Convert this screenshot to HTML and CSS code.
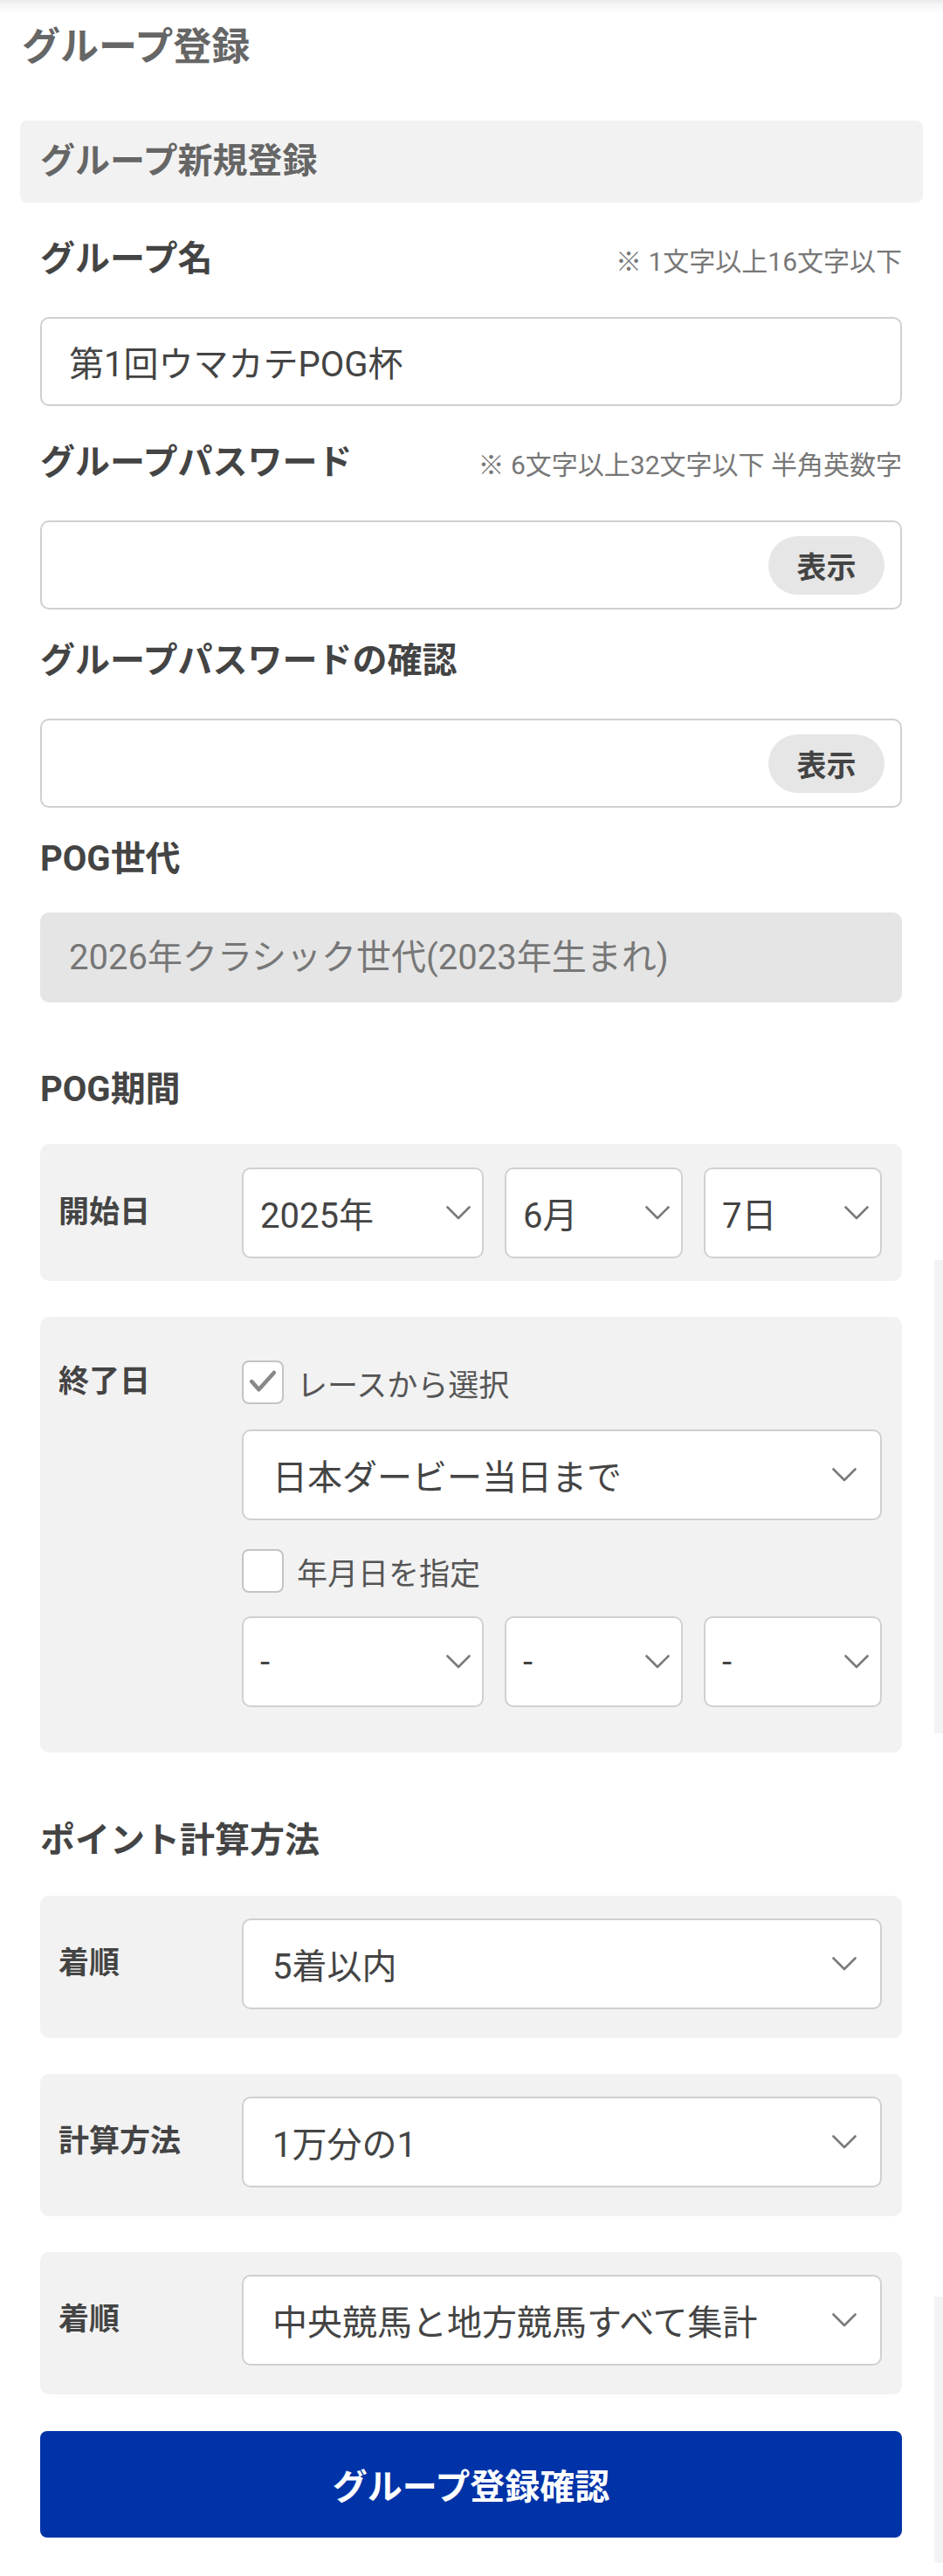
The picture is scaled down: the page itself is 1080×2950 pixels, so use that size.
FILE: index.html
```html
<!DOCTYPE html>
<html lang="ja">
<head>
<meta charset="utf-8">
<title>グループ登録</title>
<link rel="stylesheet" href="styles.css">
</head>
<body>
<div class="page">
  <h1 class="title">グループ登録</h1>
  <h2 class="section-head">グループ新規登録</h2>
  <form class="form">
    <div class="field">
      <div class="field-head with-hint">
        <label class="field-label">グループ名</label>
        <span class="hint">※ 1文字以上16文字以下</span>
      </div>
      <input class="text-input" type="text" value="第1回ウマカテPOG杯">
    </div>

    <div class="field">
      <div class="field-head with-hint">
        <label class="field-label">グループパスワード</label>
        <span class="hint">※ 6文字以上32文字以下 半角英数字</span>
      </div>
      <div class="pw-wrap">
        <input class="pw-input" type="password" value="">
        <button type="button" class="show-btn">表示</button>
      </div>
    </div>

    <div class="field">
      <div class="field-head">
        <label class="field-label">グループパスワードの確認</label>
      </div>
      <div class="pw-wrap">
        <input class="pw-input" type="password" value="">
        <button type="button" class="show-btn">表示</button>
      </div>
    </div>

    <div class="field">
      <div class="field-head">
        <label class="field-label">POG世代</label>
      </div>
      <div class="disabled-input">2026年クラシック世代(2023年生まれ)</div>
    </div>

    <div class="group-title">POG期間</div>

    <div class="row-box start-box">
      <div class="row-label tall">開始日</div>
      <div class="date-row">
        <div class="select year"><span>2025年</span><svg class="chev" viewBox="0 0 28 16" width="28" height="16"><polyline points="1.5,1.5 14,14 26.5,1.5"/></svg></div>
        <div class="select"><span>6月</span><svg class="chev" viewBox="0 0 28 16" width="28" height="16"><polyline points="1.5,1.5 14,14 26.5,1.5"/></svg></div>
        <div class="select"><span>7日</span><svg class="chev" viewBox="0 0 28 16" width="28" height="16"><polyline points="1.5,1.5 14,14 26.5,1.5"/></svg></div>
      </div>
    </div>

    <div class="row-box end-box">
      <div class="row-label short">終了日</div>
      <div class="end-col">
        <div class="check-row">
          <span class="checkbox"><svg viewBox="0 0 48 50" width="44" height="46"><polyline points="10,24 19,34 38,13"/></svg></span>
          <span>レースから選択</span>
        </div>
        <div class="select wide race-select"><span>日本ダービー当日まで</span><svg class="chev" viewBox="0 0 28 16" width="28" height="16"><polyline points="1.5,1.5 14,14 26.5,1.5"/></svg></div>
        <div class="check-row second">
          <span class="checkbox"></span>
          <span>年月日を指定</span>
        </div>
        <div class="date-row end-dates">
          <div class="select year"><span>-</span><svg class="chev" viewBox="0 0 28 16" width="28" height="16"><polyline points="1.5,1.5 14,14 26.5,1.5"/></svg></div>
          <div class="select"><span>-</span><svg class="chev" viewBox="0 0 28 16" width="28" height="16"><polyline points="1.5,1.5 14,14 26.5,1.5"/></svg></div>
          <div class="select"><span>-</span><svg class="chev" viewBox="0 0 28 16" width="28" height="16"><polyline points="1.5,1.5 14,14 26.5,1.5"/></svg></div>
        </div>
      </div>
    </div>

    <div class="group-title points-title">ポイント計算方法</div>

    <div class="row-box point-box">
      <div class="row-label tall">着順</div>
      <div class="select wide"><span>5着以内</span><svg class="chev" viewBox="0 0 28 16" width="28" height="16"><polyline points="1.5,1.5 14,14 26.5,1.5"/></svg></div>
    </div>

    <div class="row-box point-box">
      <div class="row-label tall">計算方法</div>
      <div class="select wide"><span>1万分の1</span><svg class="chev" viewBox="0 0 28 16" width="28" height="16"><polyline points="1.5,1.5 14,14 26.5,1.5"/></svg></div>
    </div>

    <div class="row-box point-box">
      <div class="row-label tall">着順</div>
      <div class="select wide"><span>中央競馬と地方競馬すべて集計</span><svg class="chev" viewBox="0 0 28 16" width="28" height="16"><polyline points="1.5,1.5 14,14 26.5,1.5"/></svg></div>
    </div>

    <button type="button" class="submit">グループ登録確認</button>
  </form>

  <div class="scroll-hint hint-a"></div>
  <div class="scroll-hint hint-b"></div>
</div>
</body>
</html>
```

FILE: styles.css
```css
* { box-sizing: border-box; }

html, body {
  margin: 0;
  padding: 0;
  background: #ffffff;
}

body {
  font-family: Roboto, "Noto Sans CJK JP", "Noto Sans", sans-serif;
  color: #444444;
}

.page {
  position: relative;
  width: 1080px;
  min-height: 2950px;
  background: linear-gradient(to bottom, #ebebeb 0px, #f7f7f7 6px, #ffffff 16px) no-repeat;
  background-size: 100% 16px;
}

.title {
  margin: 0;
  padding: 24px 0 0 25px;
  font-size: 44px;
  line-height: 60px;
  font-weight: 700;
  color: #666666;
}

.section-head {
  margin: 54px 23px 0 23px;
  height: 94px;
  padding-left: 23px;
  background: #f2f2f2;
  border-radius: 8px;
  font-size: 40px;
  line-height: 94px;
  font-weight: 700;
  color: #666666;
}

.form {
  padding: 0 47px 0 46px;
}

.field {
  margin-top: 31px;
}

.field-head {
  display: flex;
  justify-content: space-between;
  align-items: center;
  height: 56px;
}

.field-head.with-hint {
  height: 62px;
  padding-top: 6px;
}

.field-label {
  font-size: 40px;
  line-height: 56px;
  font-weight: 700;
  color: #444444;
}

.hint {
  font-size: 30px;
  color: #777777;
  white-space: nowrap;
}

.text-input {
  display: block;
  width: 100%;
  height: 102px;
  margin-top: 38px;
  padding: 0 31px;
  border: 2px solid #d0d0d0;
  border-radius: 10px;
  background: #ffffff;
  font-family: inherit;
  font-size: 40px;
  color: #444444;
  outline: none;
}

.pw-wrap {
  display: flex;
  align-items: center;
  height: 102px;
  margin-top: 38px;
  padding-right: 18px;
  border: 2px solid #d0d0d0;
  border-radius: 10px;
  background: #ffffff;
}

.pw-input {
  flex: 1;
  min-width: 0;
  height: 100%;
  border: none;
  background: transparent;
  padding: 0 31px;
  font-size: 40px;
  outline: none;
}

.show-btn {
  width: 133px;
  height: 67px;
  border: none;
  border-radius: 34px;
  background: #e6e6e6;
  font-family: inherit;
  font-size: 34px;
  font-weight: 700;
  color: #444444;
  padding: 0;
}

.disabled-input {
  height: 103px;
  margin-top: 33px;
  padding-left: 33px;
  background: #e5e5e5;
  border-radius: 10px;
  font-size: 40px;
  line-height: 103px;
  color: #777777;
}

.group-title {
  margin-top: 72px;
  font-size: 40px;
  line-height: 56px;
  font-weight: 700;
  color: #444444;
}

.row-box {
  display: grid;
  grid-template-columns: 210px 1fr;
  align-items: start;
  background: #f2f2f2;
  border-radius: 10px;
  padding: 26px 23px 26px 21px;
}

.start-box {
  margin-top: 34px;
  padding-top: 27px;
}

.end-box {
  margin-top: 41px;
  padding-top: 50px;
  padding-bottom: 52px;
}

.points-title {
  margin-top: 73px;
}

.point-box {
  margin-top: 41px;
  padding-bottom: 33px;
}

.points-title + .point-box {
  margin-top: 35px;
}

.row-label {
  font-size: 35px;
  font-weight: 700;
  color: #444444;
}

.row-label.tall { line-height: 104px; }
.row-label.short { line-height: 50px; }

.date-row {
  display: flex;
  gap: 24px;
}

.select {
  display: flex;
  align-items: center;
  justify-content: space-between;
  height: 104px;
  flex: 1 1 0;
  min-width: 0;
  padding: 0 13px 0 19px;
  background: #ffffff;
  border: 2px solid #d0d0d0;
  border-radius: 10px;
  font-size: 40px;
  color: #444444;
  white-space: nowrap;
}

.select.year {
  flex: 0 0 277px;
}

.select.wide {
  flex: none;
  padding: 0 27px 0 33px;
}

.chev {
  flex: 0 0 auto;
  fill: none;
  stroke: #7a7a7a;
  stroke-width: 2.6;
  stroke-linecap: round;
  stroke-linejoin: round;
}

.end-col {
  display: flex;
  flex-direction: column;
}

.check-row {
  display: flex;
  align-items: center;
  height: 50px;
  gap: 15px;
  font-size: 35px;
  color: #555555;
}

.check-row.second {
  margin-top: 33px;
}

.checkbox {
  display: flex;
  align-items: center;
  justify-content: center;
  width: 48px;
  height: 50px;
  border: 2px solid #c4c4c4;
  border-radius: 8px;
  background: #ffffff;
}

.checkbox svg polyline {
  fill: none;
  stroke: #888888;
  stroke-width: 5;
  stroke-linecap: round;
  stroke-linejoin: round;
}

.race-select {
  margin-top: 29px;
}

.end-dates {
  margin-top: 27px;
}

.submit {
  display: block;
  width: 100%;
  height: 122px;
  margin-top: 42px;
  border: none;
  border-radius: 8px;
  background: #0033a8;
  color: #ffffff;
  font-family: inherit;
  font-size: 40px;
  font-weight: 700;
  padding: 0;
}

.scroll-hint {
  position: absolute;
  right: 0;
  width: 10px;
  background: #f3f3f3;
}

.hint-a { top: 1443px; height: 542px; }
.hint-b { top: 2630px; height: 305px; }
```
